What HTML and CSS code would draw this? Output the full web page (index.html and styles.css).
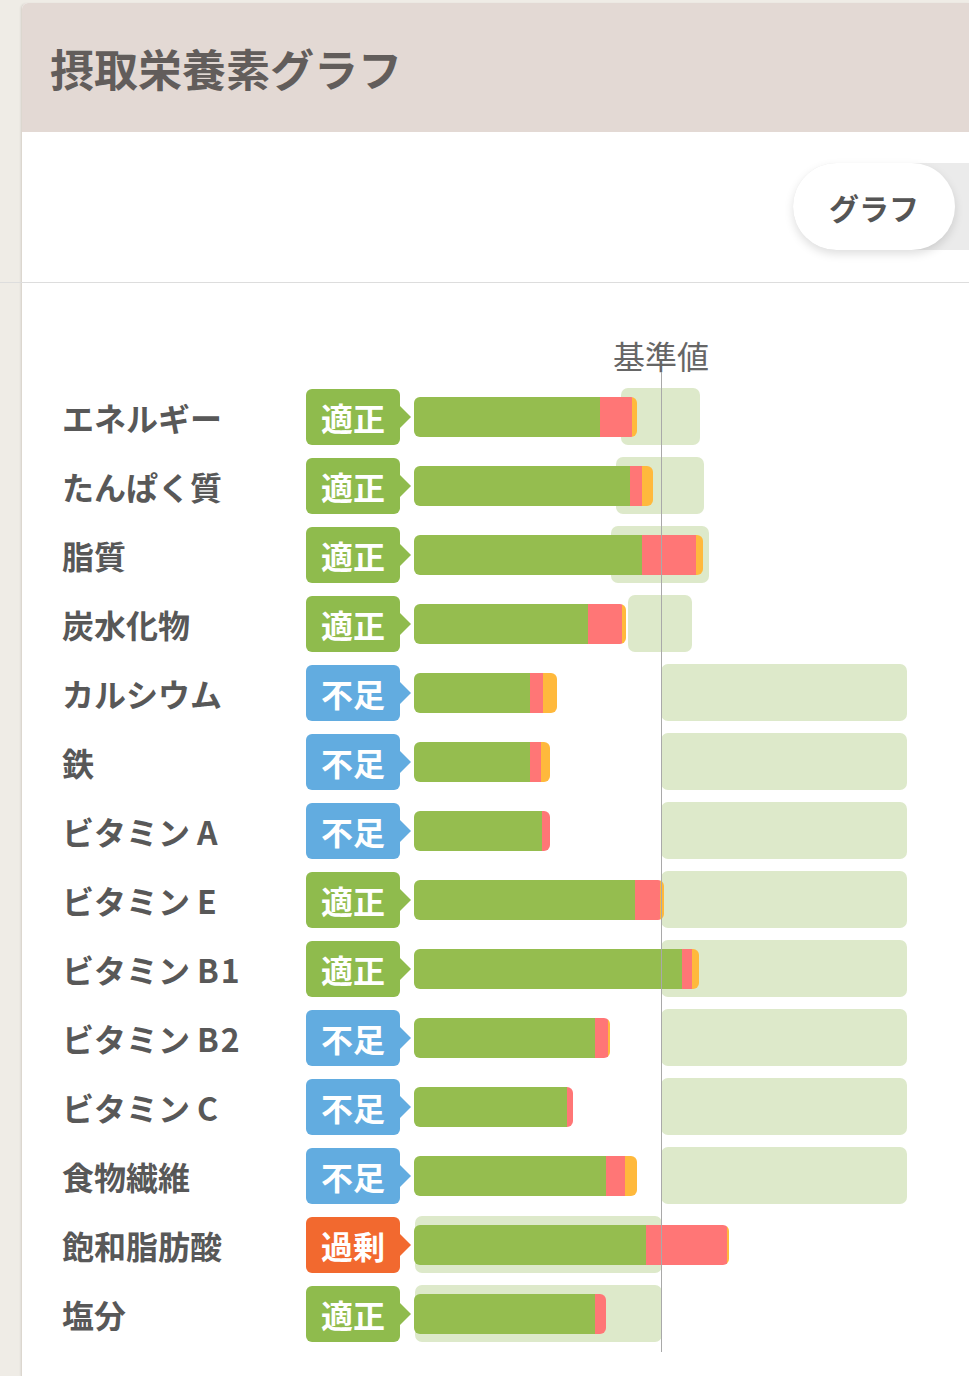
FILE: index.html
```html
<!DOCTYPE html>
<html lang="ja">
<head>
<meta charset="utf-8">
<title>摂取栄養素グラフ</title>
<link rel="stylesheet" href="styles.css">
</head>
<body>
<div class="card">
  <div class="card-header"><h1 class="title">摂取栄養素グラフ</h1></div>
  <div class="toolbar">
    <div class="segmented">
      <div class="seg-option active">グラフ</div>
      <div class="seg-option"></div>
    </div>
  </div>
  <div class="divider"></div>
  <div class="chart">
    <div class="row head-row">
      <div></div><div></div>
      <div class="ref-label-wrap"><span class="ref-label">基準値</span></div>
    </div>
    <div class="rows">
      <div class="ref-line"></div>

      <div class="row"><div class="label">エネルギー</div><div><span class="badge ok">適正</span></div>
        <div class="track"><div class="range" style="left:207px;width:79px"></div>
          <div class="bar"><span class="seg g" style="width:186px"></span><span class="seg r" style="width:32px"></span><span class="seg y" style="width:5px"></span></div></div></div>

      <div class="row"><div class="label">たんぱく質</div><div><span class="badge ok">適正</span></div>
        <div class="track"><div class="range" style="left:202px;width:88px"></div>
          <div class="bar"><span class="seg g" style="width:216px"></span><span class="seg r" style="width:12px"></span><span class="seg y" style="width:11px"></span></div></div></div>

      <div class="row"><div class="label">脂質</div><div><span class="badge ok">適正</span></div>
        <div class="track"><div class="range" style="left:197px;width:98px"></div>
          <div class="bar"><span class="seg g" style="width:228px"></span><span class="seg r" style="width:54px"></span><span class="seg y" style="width:7px"></span></div></div></div>

      <div class="row"><div class="label">炭水化物</div><div><span class="badge ok">適正</span></div>
        <div class="track"><div class="range" style="left:214px;width:64px"></div>
          <div class="bar"><span class="seg g" style="width:174px"></span><span class="seg r" style="width:34px"></span><span class="seg y" style="width:4px"></span></div></div></div>

      <div class="row"><div class="label">カルシウム</div><div><span class="badge low">不足</span></div>
        <div class="track"><div class="range" style="left:247px;width:246px"></div>
          <div class="bar"><span class="seg g" style="width:116px"></span><span class="seg r" style="width:13px"></span><span class="seg y" style="width:14px"></span></div></div></div>

      <div class="row"><div class="label">鉄</div><div><span class="badge low">不足</span></div>
        <div class="track"><div class="range" style="left:247px;width:246px"></div>
          <div class="bar"><span class="seg g" style="width:116px"></span><span class="seg r" style="width:11px"></span><span class="seg y" style="width:9px"></span></div></div></div>

      <div class="row"><div class="label">ビタミン<span class="latin">A</span></div><div><span class="badge low">不足</span></div>
        <div class="track"><div class="range" style="left:247px;width:246px"></div>
          <div class="bar"><span class="seg g" style="width:128px"></span><span class="seg r" style="width:8px"></span></div></div></div>

      <div class="row"><div class="label">ビタミン<span class="latin">E</span></div><div><span class="badge ok">適正</span></div>
        <div class="track"><div class="range" style="left:247px;width:246px"></div>
          <div class="bar"><span class="seg g" style="width:221px"></span><span class="seg r" style="width:25px"></span><span class="seg y" style="width:4px"></span></div></div></div>

      <div class="row"><div class="label">ビタミン<span class="latin">B1</span></div><div><span class="badge ok">適正</span></div>
        <div class="track"><div class="range" style="left:247px;width:246px"></div>
          <div class="bar"><span class="seg g" style="width:268px"></span><span class="seg r" style="width:10px"></span><span class="seg y" style="width:7px"></span></div></div></div>

      <div class="row"><div class="label">ビタミン<span class="latin">B2</span></div><div><span class="badge low">不足</span></div>
        <div class="track"><div class="range" style="left:247px;width:246px"></div>
          <div class="bar"><span class="seg g" style="width:181px"></span><span class="seg r" style="width:13px"></span><span class="seg y" style="width:2px"></span></div></div></div>

      <div class="row"><div class="label">ビタミン<span class="latin">C</span></div><div><span class="badge low">不足</span></div>
        <div class="track"><div class="range" style="left:247px;width:246px"></div>
          <div class="bar"><span class="seg g" style="width:153px"></span><span class="seg r" style="width:6px"></span></div></div></div>

      <div class="row"><div class="label">食物繊維</div><div><span class="badge low">不足</span></div>
        <div class="track"><div class="range" style="left:247px;width:246px"></div>
          <div class="bar"><span class="seg g" style="width:192px"></span><span class="seg r" style="width:19px"></span><span class="seg y" style="width:12px"></span></div></div></div>

      <div class="row"><div class="label">飽和脂肪酸</div><div><span class="badge over">過剰</span></div>
        <div class="track"><div class="range" style="left:1px;width:247px"></div>
          <div class="bar"><span class="seg g" style="width:232px"></span><span class="seg r" style="width:81px"></span><span class="seg y" style="width:2px"></span></div></div></div>

      <div class="row"><div class="label">塩分</div><div><span class="badge ok">適正</span></div>
        <div class="track"><div class="range" style="left:1px;width:247px"></div>
          <div class="bar"><span class="seg g" style="width:181px"></span><span class="seg r" style="width:11px"></span></div></div></div>
    </div>
  </div>
</div>
</body>
</html>
```

FILE: styles.css
```css
html {
  overflow-x: hidden;
}

body {
  margin: 0;
  padding: 3px 0 0 21px;
  background: #efece6;
  font-family: "Noto Sans CJK JP", "Noto Sans", sans-serif;
  overflow-x: hidden;
}

.card {
  background: #ffffff;
  border-left: 1px solid #dcd7cf;
  border-top-left-radius: 6px;
  min-height: 1373px;
  box-shadow: -1px 0 2px rgba(0, 0, 0, 0.06);
}

.card-header {
  height: 129px;
  background: #e3d9d4;
  display: flex;
  align-items: center;
  padding-left: 28px;
  border-top-left-radius: 6px;
}

.title {
  margin: 0;
  font-size: 44px;
  font-weight: 700;
  color: #625d5b;
  line-height: 1;
}

.toolbar {
  height: 150px;
  box-sizing: border-box;
  padding-top: 31px;
  display: flex;
  justify-content: flex-end;
}

.segmented {
  display: flex;
  flex-shrink: 0;
  height: 87px;
  background: #ebebeb;
  border-radius: 44px;
  margin-right: -148px;
}

.seg-option {
  flex-shrink: 0;
  width: 162px;
  height: 87px;
  border-radius: 44px;
  display: flex;
  align-items: center;
  justify-content: center;
  font-size: 30px;
  font-weight: 700;
  color: #555555;
}

.seg-option.active {
  background: #ffffff;
  box-shadow: 0 4px 10px rgba(0, 0, 0, 0.13);
}

.divider {
  height: 1px;
  background: #dddddd;
  margin-left: -22px;
}

.chart {
  padding: 52px 0 0 40px;
}

.row {
  display: grid;
  grid-template-columns: 244px 108px 1fr;
  height: 56px;
  align-items: center;
}

.head-row {
  height: 40px;
  margin-bottom: 14px;
}

.ref-label-wrap {
  width: 0;
  margin-left: 247px;
  display: flex;
  justify-content: center;
}

.ref-label {
  white-space: nowrap;
  font-size: 32px;
  line-height: 40px;
  color: #666666;
  font-weight: 400;
}

.rows {
  position: relative;
  display: flex;
  flex-direction: column;
  gap: 13px;
}

.ref-line {
  position: absolute;
  left: 599px;
  top: -17px;
  bottom: -10px;
  width: 1px;
  background: #a9a9a9;
  z-index: 3;
}

.label {
  font-size: 32px;
  font-weight: 700;
  color: #585858;
  line-height: 1;
  white-space: nowrap;
}

.latin {
  margin-left: 7px;
  letter-spacing: 2px;
}

.badge {
  position: relative;
  display: flex;
  align-items: center;
  justify-content: center;
  width: 94px;
  height: 56px;
  border-radius: 6px;
  color: #ffffff;
  font-size: 32px;
  font-weight: 700;
  line-height: 1;
}

.badge::after {
  content: "";
  position: absolute;
  right: -11px;
  top: 50%;
  margin-top: -12px;
  border-left: 12px solid currentColor;
  border-top: 12px solid transparent;
  border-bottom: 12px solid transparent;
}

.badge.ok {
  background: #8fbb4d;
}
.badge.ok::after {
  border-left-color: #8fbb4d;
}

.badge.low {
  background: #62ace0;
}
.badge.low::after {
  border-left-color: #62ace0;
}

.badge.over {
  background: #f2692f;
}
.badge.over::after {
  border-left-color: #f2692f;
}

.track {
  position: relative;
  height: 56px;
  align-self: stretch;
}

.range {
  position: absolute;
  top: -1px;
  height: 57px;
  background: #dde9ca;
  border-radius: 7px;
}

.bar {
  position: relative;
  z-index: 1;
  display: flex;
  width: fit-content;
  height: 40px;
  margin-top: 8px;
  border-radius: 6px;
  overflow: hidden;
}

.seg {
  display: block;
  height: 100%;
}

.seg.g {
  background: #95bd4f;
}

.seg.r {
  background: #ff7676;
}

.seg.y {
  background: #ffb93c;
}
```
